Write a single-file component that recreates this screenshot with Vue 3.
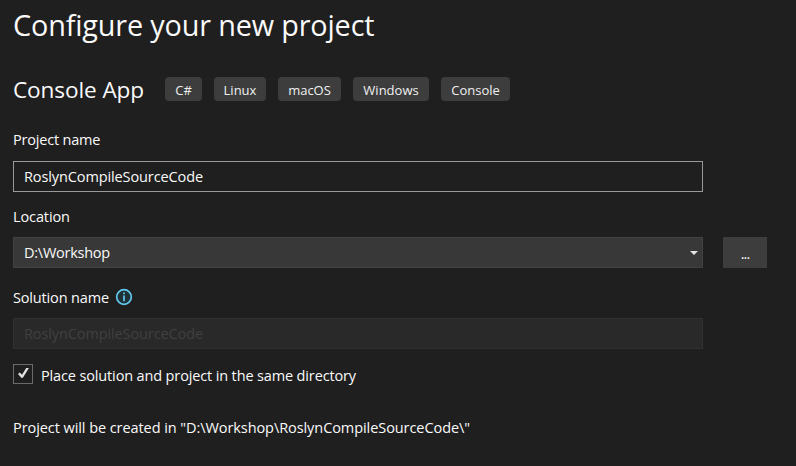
<script setup>
import { ref } from 'vue'

const tags = [
  { name: 'C#', width: 37 },
  { name: 'Linux', width: 52 },
  { name: 'macOS', width: 63 },
  { name: 'Windows', width: 76 },
  { name: 'Console', width: 69 },
]
const projectName = ref('RoslynCompileSourceCode')
const location = ref('D:\\Workshop')
const sameDirectory = ref(true)
</script>

<template>
  <main class="dialog">
    <h1>Configure your new project</h1>
    <header class="template">
      <h2>Console App</h2>
      <ul class="tags">
        <li v-for="tag in tags" :key="tag.name" :style="{ width: tag.width + 'px' }">{{ tag.name }}</li>
      </ul>
    </header>

    <div class="label project">Project name</div>
    <div class="field active">{{ projectName }}</div>

    <div class="label location">Location</div>
    <div class="row">
      <div class="field combo">
        <span class="path">{{ location }}</span>
        <svg class="arrow" width="8" height="4" viewBox="0 0 8 4"><path d="M0 0H8L4 4Z" fill="#e4e4e4" /></svg>
      </div>
      <button class="browse" type="button">...</button>
    </div>

    <div class="label solution">
      <span class="solution-text">Solution name</span>
      <svg class="info" width="18" height="18" viewBox="0 0 18 18">
        <circle cx="9" cy="9" r="7.3" fill="#203037" stroke="#61c9ee" stroke-width="1.7" />
        <path d="M9 4.5V6.3M9 7.6V13.2" stroke="#61c9ee" stroke-width="1.7" />
      </svg>
    </div>
    <div class="field disabled">{{ projectName }}</div>

    <div class="check" role="checkbox" :aria-checked="sameDirectory">
      <span class="box">
        <svg v-if="sameDirectory" width="18" height="18" viewBox="0 0 18 18">
          <path d="M4 8.9L5.8 7.6L8 9.8L12.2 2.9H14.9L8.9 12.8H7.3Z" fill="#e2e2e2" />
        </svg>
      </span>
      <span class="check-text">Place solution and project in the same directory</span>
    </div>

    <p class="summary">Project will be created in "{{ location }}\{{ projectName }}\"</p>
  </main>
</template>

<style>
body {
  background: #1f1f1f;
}
</style>

<style scoped>
.dialog {
  box-sizing: border-box;
  width: 796px;
  height: 466px;
  padding: 4px 0 0 13px;
  overflow: hidden;
  background: #1f1f1f;
  color: #fafafa;
  font: 14.5px/20px "Open Sans", "Noto Sans", sans-serif;
  letter-spacing: -0.11px;
  white-space: nowrap;
}
h1, h2, p, ul {
  margin: 0;
  padding: 0;
  font-weight: 400;
}
h1 {
  height: 40px;
  font-size: 28.8px;
  line-height: 42px;
  letter-spacing: -0.15px;
}
.template {
  display: flex;
  height: 30px;
  margin-top: 30px;
}
h2 {
  width: 152px;
  font-size: 22.6px;
  line-height: 31px;
}
.tags {
  display: flex;
  gap: 12px;
  margin-top: 3px;
  list-style: none;
}
.tags li {
  height: 24px;
  border-radius: 4px;
  background: #3d3d3d;
  color: #f0f0f0;
  font-size: 13px;
  line-height: 26px;
  letter-spacing: 0;
  text-align: center;
}
.label {
  display: flex;
  height: 20px;
}
.project {
  margin-top: 26px;
  letter-spacing: -0.2px;
}
.field {
  box-sizing: border-box;
  width: 690px;
  height: 31px;
  padding-left: 10px;
  border: 1px solid;
  line-height: 30px;
}
.active {
  margin-top: 11px;
  border-color: #999;
}
.location {
  margin-top: 15px;
}
.row {
  display: flex;
  gap: 20px;
  margin-top: 10px;
}
.combo {
  display: flex;
  align-items: center;
  justify-content: space-between;
  padding-right: 4px;
  border-color: #424242;
  background: #383838;
}
.arrow {
  margin-top: 1px;
}
.path {
  letter-spacing: -0.25px;
}
.browse {
  width: 44px;
  height: 31px;
  padding: 3px 0 0;
  border: 0;
  background: #3d3d3d;
  color: #fafafa;
  font: inherit;
  letter-spacing: -0.9px;
}
.solution {
  margin-top: 20px;
}
.solution-text {
  width: 96px;
  letter-spacing: -0.16px;
}
.info {
  margin-left: 6px;
}
.disabled {
  margin-top: 10px;
  border-color: #303030;
  background: #292929;
  color: #404040;
}
.check {
  display: flex;
  gap: 8px;
  height: 20px;
  margin-top: 15px;
}
.box {
  box-sizing: border-box;
  width: 20px;
  height: 20px;
  border: 1px solid #6b6b6b;
}
.box svg {
  display: block;
}
.check-text {
  margin-top: 2px;
  letter-spacing: -0.14px;
}
.summary {
  margin-top: 34px;
  letter-spacing: -0.07px;
}
</style>
